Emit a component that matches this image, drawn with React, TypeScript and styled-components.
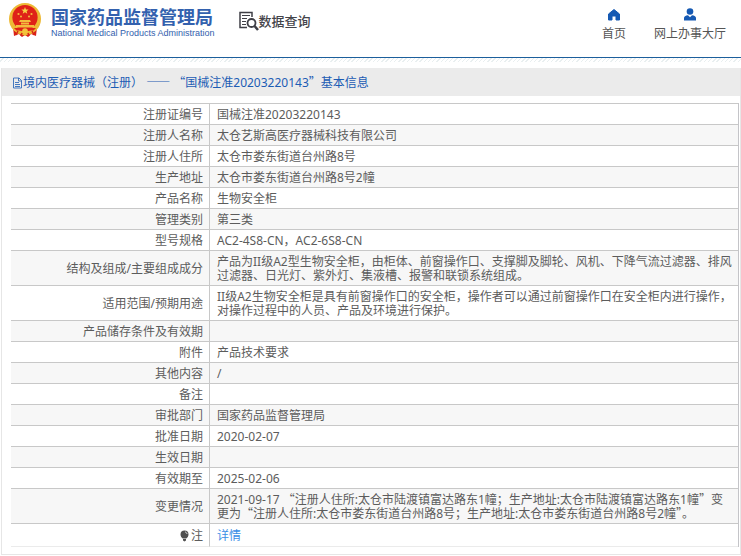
import React from "react";
import styled, { createGlobalStyle } from "styled-components";

const GlobalStyle = createGlobalStyle`
  * { box-sizing: border-box; }
  body {
    margin: 0;
    background: #fff;
    color: #5c5c5c;
    font: 12px/14px "Noto Sans", "Noto Sans CJK SC", sans-serif;
  }
`;

const Header = styled.header`
  display: flex;
  align-items: flex-start;
  height: 58px;
  border-bottom: 1px solid #1c5f9c;
`;

const Brand = styled.a`
  display: flex;
  gap: 9px;
  padding: 2px 0 0 8px;
  color: #3361ae;
  text-decoration: none;
`;

const BrandText = styled.span`
  display: flex;
  flex-direction: column;
  padding-top: 4px;
`;

const BrandName = styled.strong`
  font: 700 18px/20px "Noto Sans CJK SC", sans-serif;
`;

const BrandSub = styled.span`
  font: 400 9px/14px "Liberation Sans", sans-serif;
  white-space: nowrap;
`;

const Query = styled.a`
  display: flex;
  align-items: center;
  margin: 11px 0 0 24px;
  color: #44444a;
  font: 500 13px/20px "Noto Sans CJK SC", sans-serif;
  text-decoration: none;
`;

const Nav = styled.nav`
  display: flex;
  gap: 28px;
  margin-left: auto;
  padding: 8px 15px 0 0;
`;

const NavLink = styled.a`
  display: flex;
  flex-direction: column;
  align-items: center;
  gap: 5px;
  color: #555;
  line-height: 16px;
  text-decoration: none;
`;

const Stripe = styled.div`
  height: 4px;
  background: repeating-linear-gradient(135deg, #fff 0 2px, #e9eff0 2px 3px);
`;

const Panel = styled.main`
  margin: 6px 0 0 1px;
  padding-bottom: 7px;
  border: 1px solid #e6e6e6;
  border-top: 0;
`;

const Title = styled.h1`
  display: flex;
  align-items: center;
  height: 28px;
  margin: 0 0 7px;
  padding: 2px 10px 0;
  background: #ebebeb;
  color: #1c5cb4;
  font-size: 12px;
  font-weight: 400;
  white-space: pre;
`;

const Cjk = styled.span`
  font-family: "Noto Sans CJK SC", sans-serif;
  line-height: 0;
`;

const TableFrame = styled.div`
  margin: 0 1px 0 9px;
  border-right: 1px solid #c4c4c8;
`;

const Table = styled.table`
  width: 100%;
  border-spacing: 0;
`;

const Row = styled.tr`
  &:nth-child(even) { background: #f7f7f7; }
  &:last-child { background: #fff; }
  &:last-child > * {
    height: 24px;
    padding-bottom: 3px;
    border-bottom: 1px solid #ebebeb;
  }
`;

const Label = styled.th`
  width: 199px;
  height: 21px;
  padding: 4px 6px 2px;
  border-top: 1px solid #c8c8c8;
  border-right: 1px solid #c8c8c8;
  font-weight: 400;
  text-align: right;
`;

const Value = styled.td`
  padding: 4px 5px 2px 7px;
  border-top: 1px solid #c8c8c8;
`;

const Detail = styled.a`
  color: #3b8ee6;
  text-decoration: none;
`;

const Note = styled.span`
  display: flex;
  align-items: center;
  justify-content: flex-end;
  gap: 2px;
`;

const Emblem = () => (
  <svg width="34" height="36" viewBox="0 0 34 36" aria-hidden="true">
    <path d="M5 25 6 34l5-2 3 3 3-2 3 2 3-3 5 2 1-9z" fill="#d92218" />
    <circle cx="17" cy="17" r="16" fill="#edb935" />
    <circle cx="17" cy="15.5" r="12.6" fill="#df2118" />
    <path d="m17 5 1 2.4 2.6.2-2 1.6.7 2.5-2.3-1.4-2.3 1.4.7-2.5-2-1.6 2.6-.2z" fill="#f6cf45" />
    <g fill="#f3bd3d">
      <circle cx="10.5" cy="12" r="1.1" />
      <circle cx="13" cy="14.5" r="1" />
      <circle cx="21" cy="14.5" r="1" />
      <circle cx="23.5" cy="12" r="1.1" />
      <path d="M12 18h10l1 2H11zM13 20.500h8v2h-8zM8 23h18v2.500H8z" />
    </g>
    <path d="M6 26h22l-3 3H9z" fill="#df2118" />
    <path d="M8 29c4-1 6 0 9 2 3-2 5-3 9-2l-1 3c-3-1-5 0-8 2-3-2-5-3-8-2z" fill="#efba34" />
    <circle cx="17" cy="29" r="2.800" fill="#f4c33b" />
    <path d="m10 29-2 4m16-4 2 4M14 31l-1 3m7-3 1 3" stroke="#d92218" strokeWidth="1.500" />
  </svg>
);

const QueryIcon = () => (
  <svg width="20" height="20" viewBox="0 0 20 20" fill="none" stroke="#3f3f46" aria-hidden="true">
    <path d="M8 16.500H1V1.500h12V6" strokeWidth="1.500" />
    <path d="M3 4.500h8M3 7.500h5M3 10.500h4M3 13.500h4" strokeWidth="1.200" />
    <circle cx="12.500" cy="12" r="4" strokeWidth="1.800" />
    <path d="m15.500 15 3.500 4" strokeWidth="2.500" />
  </svg>
);

const HomeIcon = () => (
  <svg width="14" height="13" viewBox="0 0 14 13" aria-hidden="true">
    <path d="M7 1.500 12.500 6v6H9V8H5v4H1.500V6z" fill="#1559b3" stroke="#1559b3" strokeLinejoin="round" />
  </svg>
);

const UserIcon = () => (
  <svg width="14" height="13" viewBox="0 0 14 13" fill="#1559b3" aria-hidden="true">
    <circle cx="7" cy="3.500" r="3.300" />
    <path d="M1 12.500V10c0-1.500 1.500-2.500 4-2.800l2 2 2-2c2.500.3 4 1.300 4 2.800v2.500z" />
  </svg>
);

const DocIcon = () => (
  <svg width="11" height="12" viewBox="0 0 11 12" fill="none" stroke="#1c5cb4" aria-hidden="true">
    <path d="M1.500 1H7l2.500 2.500V11h-8zM6.500 1v3h3M3 5.500h4M3 7.500h5M3 9.500h5" strokeWidth=".8" />
  </svg>
);

const BulbIcon = () => (
  <svg width="9" height="12" viewBox="0 0 9 12" aria-hidden="true">
    <path d="M4.500.5a4 4 0 0 0-4 4c0 2 1.200 3 2.200 4h3.600c1-1 2.200-2 2.200-4a4 4 0 0 0-4-4zM3 9h3v1.500L4.500 11.500 3 10.500z" fill="#505050" />
    <path d="M5 2c1 .1 1.800.9 2 2" fill="none" stroke="#ddd" />
  </svg>
);

const withQuotes = (text: string) =>
  text.split(/([“”])/).map((part, i) => (/[“”]/.test(part) ? <Cjk key={i}>{part}</Cjk> : part));

const rows: [string, string][] = [
  ["注册证编号", "国械注准20203220143"],
  ["注册人名称", "太仓艺斯高医疗器械科技有限公司"],
  ["注册人住所", "太仓市娄东街道台州路8号"],
  ["生产地址", "太仓市娄东街道台州路8号2幢"],
  ["产品名称", "生物安全柜"],
  ["管理类别", "第三类"],
  ["型号规格", "AC2-4S8-CN，AC2-6S8-CN"],
  ["结构及组成/主要组成成分", "产品为II级A2型生物安全柜，由柜体、前窗操作口、支撑脚及脚轮、风机、下降气流过滤器、排风过滤器、日光灯、紫外灯、集液槽、报警和联锁系统组成。"],
  ["适用范围/预期用途", "II级A2生物安全柜是具有前窗操作口的安全柜，操作者可以通过前窗操作口在安全柜内进行操作，对操作过程中的人员、产品及环境进行保护。"],
  ["产品储存条件及有效期", ""],
  ["附件", "产品技术要求"],
  ["其他内容", "/"],
  ["备注", ""],
  ["审批部门", "国家药品监督管理局"],
  ["批准日期", "2020-02-07"],
  ["生效日期", ""],
  ["有效期至", "2025-02-06"],
  ["变更情况", "2021-09-17 “注册人住所:太仓市陆渡镇富达路东1幢；生产地址:太仓市陆渡镇富达路东1幢”变更为“注册人住所:太仓市娄东街道台州路8号；生产地址:太仓市娄东街道台州路8号2幢”。"],
];

export default function App() {
  return (
    <div lang="zh-CN">
      <GlobalStyle />
      <Header>
        <Brand href="#">
          <Emblem />
          <BrandText>
            <BrandName>国家药品监督管理局</BrandName>
            <BrandSub>National Medical Products Administration</BrandSub>
          </BrandText>
        </Brand>
        <Query href="#">
          <QueryIcon />
          数据查询
        </Query>
        <Nav>
          <NavLink href="#"><HomeIcon />首页</NavLink>
          <NavLink href="#"><UserIcon />网上办事大厅</NavLink>
        </Nav>
      </Header>
      <Stripe />
      <Panel>
        <Title>
          <DocIcon />
          <span>境内医疗器械（注册） <Cjk>——</Cjk> {withQuotes("“国械注准20203220143”基本信息")}</span>
        </Title>
        <TableFrame>
          <Table>
            <tbody>
              {rows.map(([label, value]) => (
                <Row key={label}>
                  <Label scope="row">{label}</Label>
                  <Value>{withQuotes(value)}</Value>
                </Row>
              ))}
              <Row>
                <Label scope="row"><Note><BulbIcon />注</Note></Label>
                <Value><Detail href="#">详情</Detail></Value>
              </Row>
            </tbody>
          </Table>
        </TableFrame>
      </Panel>
    </div>
  );
}
